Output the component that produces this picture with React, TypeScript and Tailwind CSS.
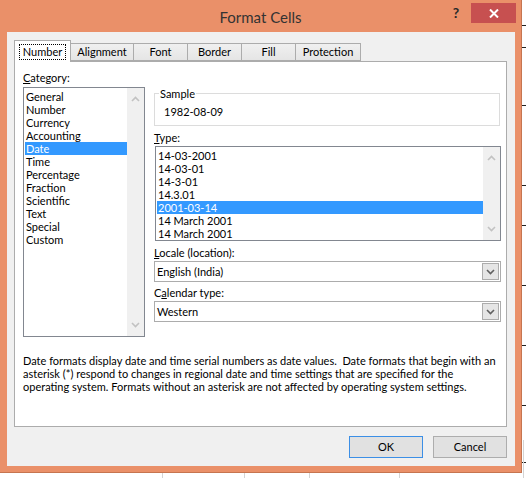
import React from "react";

const categories = [
  "General",
  "Number",
  "Currency",
  "Accounting",
  "Date",
  "Time",
  "Percentage",
  "Fraction",
  "Scientific",
  "Text",
  "Special",
  "Custom",
];

const dateTypes = [
  "14-03-2001",
  "14-03-01",
  "14-3-01",
  "14.3.01",
  "2001-03-14",
  "14 March 2001",
  "14 March 2001",
];

const tabs = [
  { label: "Number", width: "w-[57px]" },
  { label: "Alignment", width: "w-[64px]" },
  { label: "Font", width: "w-[55px]" },
  { label: "Border", width: "w-[55px]" },
  { label: "Fill", width: "w-[55px]" },
  { label: "Protection", width: "w-[66px]" },
];

const Chevron = ({ up, className }: { up?: boolean; className?: string }) => (
  <svg width="9" height="6" viewBox="0 0 9 6" className={className}>
    <path
      d={up ? "M1 5 L4.5 1.5 L8 5" : "M1 1 L4.5 4.5 L8 1"}
      fill="none"
      stroke="currentColor"
      strokeWidth="1.6"
    />
  </svg>
);

const ScrollTrack = () => (
  <div className="flex flex-col justify-between items-center bg-[#F0F0F0] py-[8px] w-[17px] h-full text-[#C2C2C2]">
    <Chevron up />
    <Chevron />
  </div>
);

const ListBox = ({
  items,
  selected,
  height,
  className,
}: {
  items: string[];
  selected: number;
  height: string;
  className?: string;
}) => (
  <div className={`flex bg-white border border-[#828790] ${height} ${className || ""}`}>
    <div className="flex-1 pt-[2px] pl-[1px]">
      {items.map((item, i) => (
        <div
          key={i}
          className={`h-[13px] px-[1px] leading-[13px] whitespace-nowrap ${
            i === selected ? "bg-[#3399FF] text-white" : ""
          }`}
        >
          {item}
        </div>
      ))}
    </div>
    <ScrollTrack />
  </div>
);

const Combo = ({ value }: { value: string }) => (
  <div className="flex bg-white border border-[#ACACAC] h-[21px]">
    <div className="flex-1 pl-[2px] leading-[19px]">{value}</div>
    <div className="flex justify-center items-center bg-[#E5E5E5] m-[1px] border border-[#ACACAC] w-[17px] text-[#606060]">
      <Chevron />
    </div>
  </div>
);

const Button = ({ label, primary }: { label: string; primary?: boolean }) => (
  <button
    className={`bg-[#E1E1E1] border w-[74px] h-[22px] leading-[20px] text-black ${
      primary ? "border-[#3C8FE6]" : "border-[#ADADAD]"
    }`}
  >
    {label}
  </button>
);

const App: React.FC = () => {
  return (
    <div className="flex flex-col bg-white w-[526px] h-[478px] overflow-hidden font-['Lato',sans-serif] text-[11px] text-black">
      <div className="flex">
        <div className="flex flex-col bg-[#EA9069] border-[#C67550] border-r border-b w-[522px] h-[473px]">
          {/* title bar */}
          <div className="grid grid-cols-[1fr_auto_1fr] h-[32px]">
            <div />
            <div className="pt-[6px] text-[#333333] text-[15px] leading-[22px]">Format Cells</div>
            <div className="flex justify-end items-start pr-[5px]">
              <div className="mt-[4px] mr-[7px] w-[16px] font-bold text-[#2A2A2A] text-[14px] text-center leading-[18px]">
                ?
              </div>
              <div className="flex justify-center items-center bg-[#C75050] mt-[3px] w-[45px] h-[20px]">
                <svg width="10" height="9" viewBox="0 0 10 9">
                  <path d="M1 0.5 L9 8.5 M9 0.5 L1 8.5" stroke="white" strokeWidth="2" />
                </svg>
              </div>
            </div>
          </div>

          {/* dialog body */}
          <div className="flex flex-col bg-[#F0F0F0] mr-[6px] ml-[7px] pt-[8px] pr-[8px] pl-[7px] h-[434px]">
            <div className="flex items-end h-[22px]">
              {tabs.map((tab, i) =>
                i === 0 ? (
                  <div
                    key={tab.label}
                    className={`relative z-10 flex justify-center items-center bg-white border border-[#ACACAC] border-b-0 ${tab.width} h-[22px]`}
                  >
                    <span className="px-[3px] border border-black border-dotted leading-[14px]">{tab.label}</span>
                  </div>
                ) : (
                  <div
                    key={tab.label}
                    className={`flex justify-center items-center bg-gradient-to-b from-[#F0F0F0] to-[#E5E5E5] -ml-px mb-[1px] border border-[#ACACAC] ${tab.width} h-[18px] leading-[16px]`}
                  >
                    {tab.label}
                  </div>
                )
              )}
            </div>

            <div className="flex flex-col bg-white -mt-px pt-[9px] pl-[8px] border border-[#ACACAC] h-[366px]">
              <div className="flex gap-[9px]">
                <div className="flex flex-col w-[122px]">
                  <div className="mb-[3px] h-[13px] leading-[13px]">
                    <span className="underline">C</span>ategory:
                  </div>
                  <ListBox items={categories} selected={4} height="h-[250px]" />
                </div>

                <div className="flex flex-col pt-[16px] w-[347px]">
                  <fieldset className="mr-[1px] border border-[#DCDCDC] h-[39px]">
                    <legend className="ml-[4px] px-[1px] leading-[13px]">Sample</legend>
                    <div className="pt-[5px] pl-[9px] leading-[13px]">1982-08-09</div>
                  </fieldset>

                  <div className="mt-[5px] mb-[2px] h-[13px] leading-[13px]">
                    <span className="underline">T</span>ype:
                  </div>
                  <ListBox items={dateTypes} selected={4} height="h-[95px]" className="ml-[1px]" />

                  <div className="mt-[5px] mb-[2px] h-[13px] leading-[13px]">
                    <span className="underline">L</span>ocale (location):
                  </div>
                  <Combo value="English (India)" />

                  <div className="mt-[4px] mb-[2px] h-[13px] leading-[13px]">
                    C<span className="underline">a</span>lendar type:
                  </div>
                  <Combo value="Western" />
                </div>
              </div>

              <p className="mt-[17px] leading-[13px] whitespace-pre">
                {"Date formats display date and time serial numbers as date values.  Date formats that begin with an\nasterisk (*) respond to changes in regional date and time settings that are specified for the\noperating system. Formats without an asterisk are not affected by operating system settings."}
              </p>
            </div>

            <div className="flex justify-end gap-[10px] mt-[9px]">
              <Button label="OK" primary />
              <Button label="Cancel" />
            </div>
          </div>
        </div>

        {/* spreadsheet grid peeking out on the right */}
        <svg width="4" height="473" className="shrink-0">
          {[25, 47, 105, 185, 225, 285, 345, 405, 462].map((y) => (
            <line key={y} x1="0" y1={y + 0.5} x2="4" y2={y + 0.5} stroke="#222" />
          ))}
          <line x1="1.5" y1="440" x2="1.5" y2="473" stroke="#D4D4D4" />
        </svg>
      </div>

      {/* spreadsheet grid peeking out below */}
      <svg width="526" height="5" className="shrink-0">
        {[162, 244, 309, 399, 523].map((x) => (
          <line key={x} x1={x + 0.5} y1="0" x2={x + 0.5} y2="5" stroke="#D4D4D4" />
        ))}
      </svg>
    </div>
  );
};

export default App;
